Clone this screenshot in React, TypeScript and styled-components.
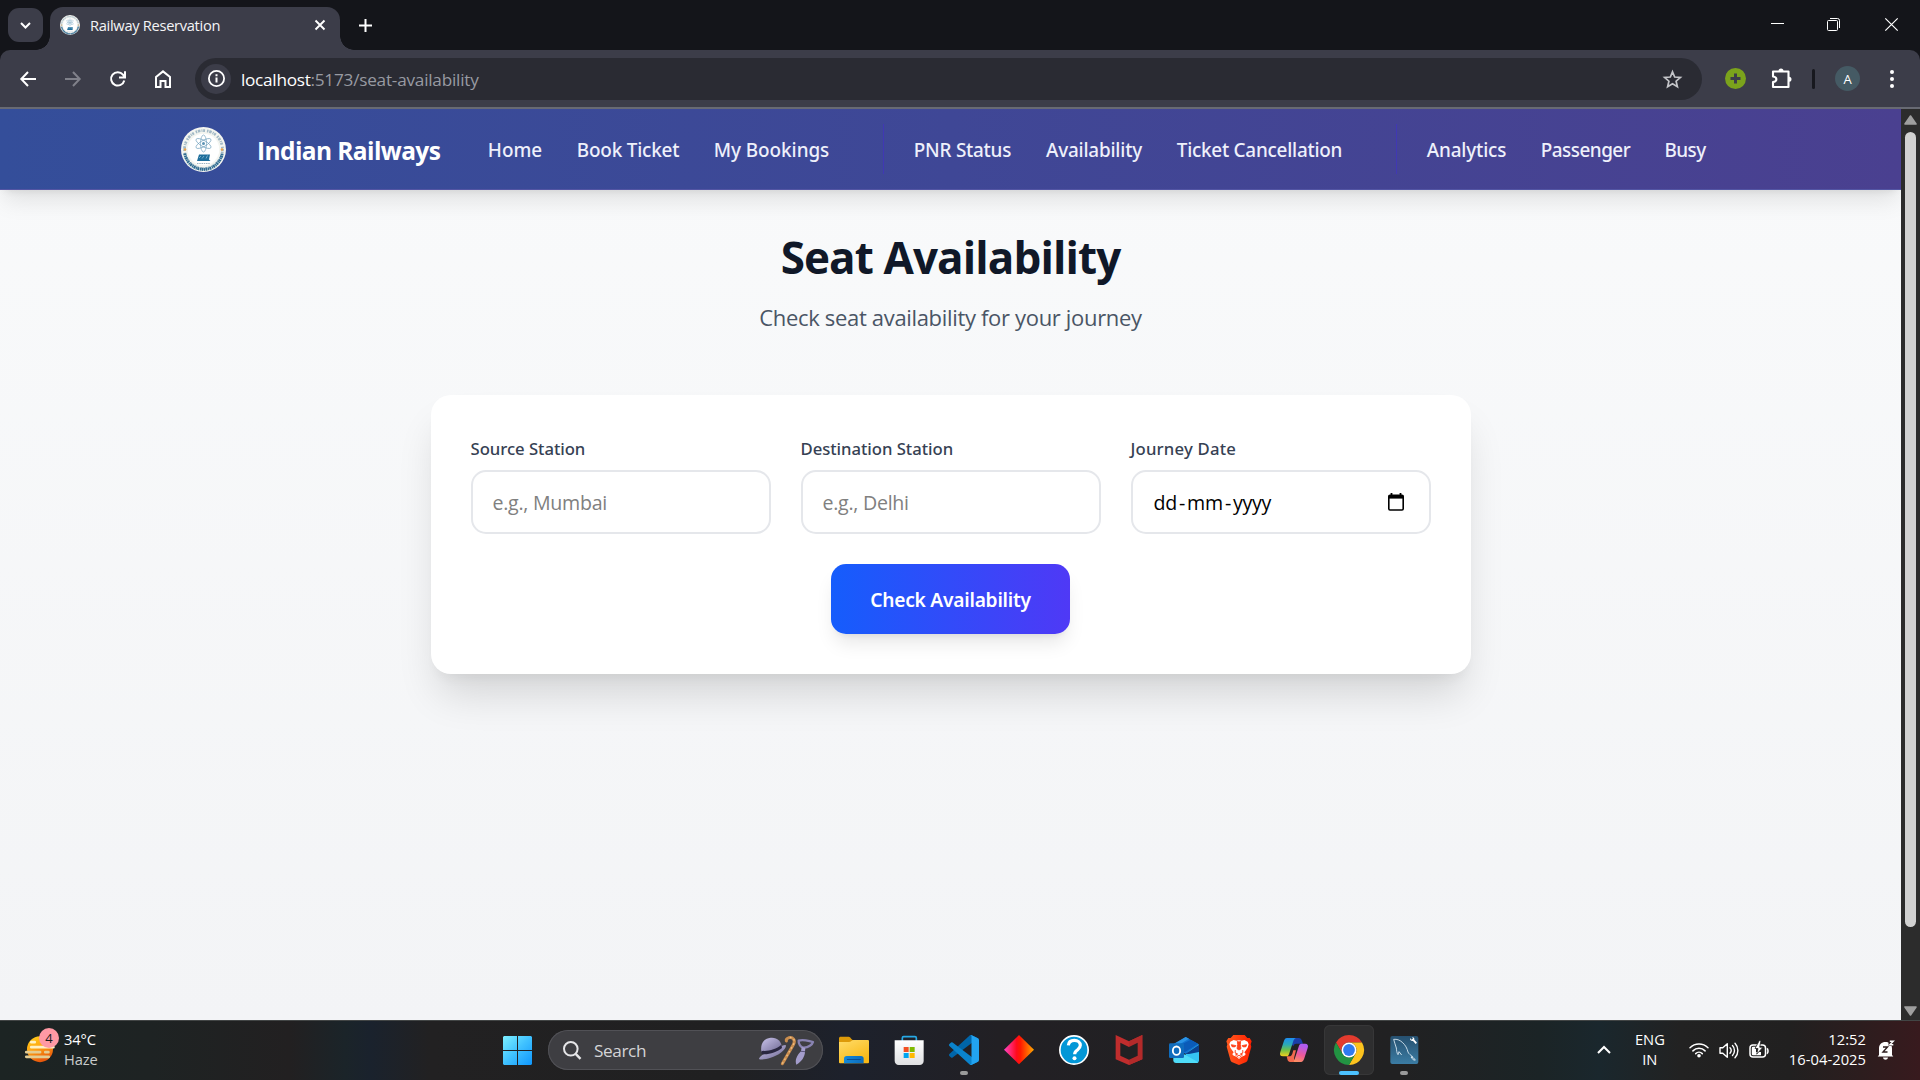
import React from "react";
import styled, { createGlobalStyle, css } from "styled-components";

const Global = createGlobalStyle`
  * { box-sizing: border-box; }
  html, body { margin: 0; padding: 0; }
  body { overflow: hidden; background: #14151a; }
  svg { display: block; flex: none; overflow: visible; }
`;

const Screen = styled.div`
  width: 1920px;
  height: 1080px;
  display: flex;
  flex-direction: column;
  font-family: "Open Sans", "Noto Sans", sans-serif;
  overflow: hidden;
`;

/* ---------- browser tab strip ---------- */

const TabStrip = styled.div`
  height: 50px;
  flex: none;
  display: flex;
  background: #14151a;
  padding: 7px 0 0 8px;
`;

const TabSearch = styled.div`
  width: 35px;
  height: 34px;
  margin: 1px 7px 0 0;
  border-radius: 11px;
  background: #3c3d49;
  display: grid;
  place-items: center;
`;

const Tab = styled.div`
  position: relative;
  width: 290px;
  height: 43px;
  padding: 0 15px 7px 10px;
  display: flex;
  align-items: center;
  background: #3c3d49;
  border-radius: 13px 13px 0 0;

  &::before,
  &::after {
    content: "";
    position: absolute;
    bottom: 0;
    width: 14px;
    height: 14px;
  }
  &::before {
    left: -14px;
    background: radial-gradient(circle at 0 0, transparent 13.5px, #3c3d49 14px);
  }
  &::after {
    right: -14px;
    background: radial-gradient(circle at 100% 0, transparent 13.5px, #3c3d49 14px);
  }
`;

const TabTitle = styled.span`
  flex: 1;
  padding: 0 0 1px 10px;
  font-size: 14.7px;
  letter-spacing: -0.32px;
  color: #f4f4f6;
  white-space: nowrap;
`;

const NewTab = styled.div`
  width: 50px;
  height: 36px;
  display: grid;
  place-items: center;
`;

const WindowControls = styled.div`
  margin-left: auto;
  display: flex;
  height: 35px;
`;

const WindowButton = styled.div<{ $w: number }>`
  width: ${(p) => p.$w}px;
  display: grid;
  place-items: center;
`;

/* ---------- browser toolbar ---------- */

const ToolbarBack = styled.div`
  background: #14151a;
  flex: none;
`;

const Toolbar = styled.div`
  height: 59px;
  display: flex;
  align-items: center;
  background: #3c3d49;
  border-radius: 10px 10px 0 0;
  border-bottom: 2px solid #686a73;
  padding-left: 5px;

  & > * {
    flex: none;
  }
`;

const ToolButton = styled.div<{ $w?: number; $end?: boolean }>`
  width: ${(p) => p.$w ?? 45}px;
  height: 42px;
  margin-left: ${(p) => (p.$end ? "auto" : 0)};
  display: grid;
  place-items: center;
`;

const Omnibox = styled.div`
  width: 1507px;
  height: 42px;
  margin-left: 10px;
  border-radius: 21px;
  background: #2a2b33;
  display: flex;
  align-items: center;
  padding: 0 20px 0 6px;
`;

const SiteInfo = styled.div`
  width: 30px;
  height: 30px;
  border-radius: 50%;
  background: #3c3d49;
  display: grid;
  place-items: center;
`;

const Url = styled.span`
  flex: 1;
  padding: 1px 0 0 10px;
  font-size: 17.2px;
  letter-spacing: -0.23px;
  color: #989aa2;
`;

const Host = styled.span`
  color: #ffffff;
  letter-spacing: -0.28px;
`;

const Separator = styled.div`
  width: 3px;
  height: 20px;
  border-radius: 2px;
  background: #17181e;
  margin-right: 3px;
`;

const Avatar = styled.div`
  width: 25px;
  height: 25px;
  border-radius: 50%;
  background: #455a64;
  color: #fff;
  font-size: 13px;
  display: grid;
  place-items: center;
`;

/* ---------- viewport ---------- */

const Viewport = styled.div`
  flex: 1;
  min-height: 0;
  display: flex;
`;

const Page = styled.div`
  width: 1901px;
  display: flex;
  flex-direction: column;
  overflow: hidden;
  background: linear-gradient(to bottom, #f9fafb, #f3f4f6);
`;

const Scrollbar = styled.div`
  width: 19px;
  background: #2c2c2c;
  display: flex;
  flex-direction: column;
  align-items: center;
  padding: 6px 0 4px;
`;

const Thumb = styled.div`
  width: 11px;
  height: 795px;
  margin: 7px 0 auto;
  border-radius: 6px;
  background: #d1d1d1;
`;

const SiteHeader = styled.header`
  position: relative;
  z-index: 1;
  height: 81px;
  flex: none;
  display: flex;
  align-items: center;
  padding-left: 181px;
  background: linear-gradient(to right, #344e9a, #3f4796 50%, #4a4090);
  border-bottom: 1px solid #5355a4;
  box-shadow: 0 14px 22px -4px rgba(0, 0, 0, 0.1), 0 5px 8px -5px rgba(0, 0, 0, 0.1);
`;

const Brand = styled.span`
  width: 184px;
  margin-left: 30px;
  padding: 3px 0 0 1px;
  font-size: 24.5px;
  font-weight: 700;
  letter-spacing: -0.6px;
  color: #fff;
  white-space: nowrap;
`;

const NavGroup = styled.nav<{ $divided?: boolean }>`
  display: flex;
  align-items: center;
  gap: 33px;
  height: 50px;
  margin-left: 47px;
  ${(p) =>
    p.$divided &&
    css`
      margin-left: 53px;
      padding-left: 29px;
      border-left: 1px solid #4038b4;
    `}
`;

const NavLink = styled.a<{ $w: number; $track: number }>`
  width: ${(p) => p.$w}px;
  padding-top: 1px;
  display: flex;
  justify-content: center;
  font-family: "Noto Sans", sans-serif;
  font-size: 18.9px;
  font-weight: 500;
  letter-spacing: ${(p) => p.$track}px;
  color: #eef0fb;
  white-space: nowrap;
`;

const Main = styled.main`
  display: flex;
  flex-direction: column;
  align-items: center;
  padding-top: 42px;
`;

const Heading = styled.h1`
  margin: 0;
  font-size: 44px;
  line-height: 50px;
  font-weight: 700;
  letter-spacing: -0.9px;
  color: #101828;
`;

const Lead = styled.p`
  margin: 19px 0 0;
  font-size: 22px;
  line-height: 32px;
  letter-spacing: -0.33px;
  color: #4a5565;
`;

const Card = styled.form`
  width: 1040px;
  height: 279px;
  margin-top: 62px;
  padding: 41px 40px 39px;
  border-radius: 20px;
  background: #fff;
  box-shadow: 0 27px 42px -8px rgba(0, 0, 0, 0.14), 0 10px 12.5px -7.5px rgba(0, 0, 0, 0.06);
  display: flex;
  flex-direction: column;
  align-items: center;
  gap: 30px;
`;

const Fields = styled.div`
  width: 100%;
  display: grid;
  grid-template-columns: repeat(3, 1fr);
  gap: 30px;
`;

const Field = styled.label<{ $track?: number }>`
  display: flex;
  flex-direction: column;
  gap: 9px;
  font-family: "Noto Sans", sans-serif;
  font-size: 16.7px;
  line-height: 25px;
  font-weight: 500;
  letter-spacing: ${(p) => p.$track ?? -0.04}px;
  color: #364153;
`;

const control = css`
  width: 100%;
  height: 64px;
  border: 2px solid #e5e7eb;
  border-radius: 15px;
  background: #fff;
  font-family: "Open Sans", "Noto Sans", sans-serif;
  font-size: 19.6px;
  font-weight: 400;
`;

const TextInput = styled.input`
  ${control}
  padding: 1px 20px 0;
  letter-spacing: -0.27px;
  &::placeholder {
    color: #808080;
    opacity: 1;
  }
`;

const DateInput = styled.div`
  ${control}
  display: flex;
  align-items: center;
  justify-content: space-between;
  padding: 0 25px 0 21px;
  letter-spacing: -0.3px;
  color: #000;
`;

const DateParts = styled.span`
  display: flex;
  gap: 2.1px;
  padding-top: 1px;
`;

const Submit = styled.button`
  width: 239px;
  height: 70px;
  flex: none;
  border: 0;
  border-radius: 15px;
  background: linear-gradient(to right, #155dfc, #4f39f6);
  box-shadow: 0 12.5px 19px -4px rgba(0, 0, 0, 0.1), 0 5px 7.5px -5px rgba(0, 0, 0, 0.1);
  font-family: "Noto Sans", sans-serif;
  font-size: 19.2px;
  font-weight: 600;
  letter-spacing: -0.24px;
  color: #fff;
`;

/* ---------- taskbar ---------- */

const Taskbar = styled.div`
  height: 60px;
  flex: none;
  display: flex;
  align-items: center;
  padding-bottom: 1px;
  border-top: 1px solid #424545;
  background: linear-gradient(
    to right,
    #1c2423 0,
    #1e2323 150px,
    #222021 290px,
    #1b2429 345px,
    #1a222d 370px,
    #222122 430px,
    #202021 720px,
    #1d212c 850px,
    #222024 1000px,
    #212122 1400px,
    #1b2426 1540px,
    #1a272d 1600px,
    #222222 1680px,
    #212020 1790px,
    #2c1d1e 1860px,
    #381a1e 1920px
  );

  & > * {
    flex: none;
  }
`;

const Weather = styled.div`
  width: 492px;
  padding-left: 25px;
  display: flex;
  align-items: center;
  gap: 5px;
`;

const WeatherIcon = styled.div`
  position: relative;
  margin-top: -10px;
`;

const Badge = styled.span`
  position: absolute;
  left: 14px;
  top: 1px;
  width: 20px;
  height: 20px;
  border-radius: 50%;
  background: #ff99a4;
  color: #1a1a1a;
  font-size: 13px;
  line-height: 20px;
  text-align: center;
`;

const Lines = styled.div<{ $align?: string; $w?: number; $track?: number }>`
  width: ${(p) => (p.$w ? p.$w + "px" : "auto")};
  margin-top: -3px;
  display: flex;
  flex-direction: column;
  text-align: ${(p) => p.$align ?? "left"};
  font-size: 14.7px;
  line-height: 20px;
  letter-spacing: ${(p) => p.$track ?? 0}px;
  color: #fff;
  white-space: nowrap;
`;

const Muted = styled.span`
  color: #c9cbcb;
`;

const Slot = styled.div<{ $active?: boolean; $running?: boolean }>`
  position: relative;
  width: 50px;
  height: 50px;
  margin-right: 5px;
  border-radius: 6px;
  display: grid;
  place-items: center;
  ${(p) =>
    p.$active &&
    css`
      background: #2e2e2f;
      box-shadow: inset 0 0 0 1px #373738;
    `}
  ${(p) =>
    (p.$active || p.$running) &&
    css`
      &::after {
        content: "";
        position: absolute;
        bottom: 0;
        left: ${p.$active ? 15 : 21}px;
        width: ${p.$active ? 20 : 8}px;
        height: 4px;
        border-radius: 2px;
        background: ${p.$active ? "#4cc2ff" : "#9a9a9a"};
      }
    `}
`;

const SearchBox = styled.div`
  width: 275px;
  height: 40px;
  margin: 0 6px 0 1px;
  border-radius: 20px;
  background: #3e3e42;
  box-shadow: inset 0 0 0 1px #515156;
  display: flex;
  align-items: center;
  padding: 0 9px 0 15px;
`;

const SearchLabel = styled.span`
  flex: 1;
  padding-left: 13px;
  font-size: 17.2px;
  letter-spacing: -0.4px;
  color: #d4d4d6;
`;

const Tray = styled.div`
  margin-left: auto;
  display: flex;
  align-items: center;
  padding-right: 25px;
`;

const TrayIcons = styled.div`
  display: flex;
  align-items: center;
  gap: 10px;
  margin-right: 20px;
`;

const Clock = styled(Lines)`
  margin-right: 11px;
`;

/* ---------- drawings ---------- */

const Emblem = ({ size }: { size: number }) => (
  <svg width={size} height={size} viewBox="0 0 90 90">
    <circle cx="45" cy="45" r="45" fill="#f4f5f0" />
    <circle cx="45" cy="45" r="38" fill="none" stroke="#7f9fb4" strokeWidth="5.5" strokeDasharray="3 1.6 5 2.2 2 1.4 4 4" pathLength="239" opacity=".7" />
    <path d="M7.5 53a38 38 0 0 0 75 0" fill="none" stroke="#2f6c92" strokeWidth="6" strokeDasharray="3.6 1.2 2.4 1" />
    <circle cx="45" cy="45" r="31.5" fill="#fff" />
    <circle cx="8" cy="45" r="2.6" fill="#e8a04a" />
    <circle cx="82" cy="45" r="2.6" fill="#e8a04a" />
    <g fill="none" stroke="#6c9dbb" strokeWidth="1.3">
      <ellipse cx="45" cy="33" rx="6" ry="17" />
      <ellipse cx="45" cy="33" rx="6" ry="17" transform="rotate(60 45 33)" />
      <ellipse cx="45" cy="33" rx="6" ry="17" transform="rotate(120 45 33)" />
    </g>
    <circle cx="45" cy="33" r="3" fill="#5d94b5" />
    <path d="M36 55h22l-2 10 3 3H32z" fill="#1f6f9c" />
    <path d="M36 62l4-4M42 63l4-5M50 63l3-6" stroke="#9cc8de" strokeWidth="1.4" />
    <path d="M32 73h26" stroke="#9db4c2" strokeWidth="2.4" strokeDasharray="3 1.5" />
  </svg>
);

const stroke = { fill: "none", stroke: "#fff", strokeWidth: 2 } as const;

const HazeIcon = () => (
  <svg width="34" height="37" viewBox="75 80 102 110">
    <defs>
      <linearGradient id="sun" x1="0" y1="0" x2="0.4" y2="1">
        <stop offset="0" stopColor="#ffd21a" />
        <stop offset=".5" stopColor="#ffa713" />
        <stop offset="1" stopColor="#e8590c" />
      </linearGradient>
    </defs>
    <circle cx="120" cy="146" r="39" fill="url(#sun)" />
    <g strokeLinecap="round" strokeWidth="8.5">
      <path d="M94 125h10M94 140h66" stroke="#fff1c4" />
      <path d="M79 155h41M136 155h9M79 169h67" stroke="#e3cc92" />
    </g>
  </svg>
);

const StartIcon = () => (
  <svg width="29" height="29" viewBox="0 0 29 29">
    <defs>
      <linearGradient id="win" x1="0" y1="0" x2="1" y2="1">
        <stop offset="0" stopColor="#7df0ff" />
        <stop offset=".5" stopColor="#3fc1ff" />
        <stop offset="1" stopColor="#0f96fc" />
      </linearGradient>
    </defs>
    <path d="M1 0h13v14H0V1zM15 0h13l1 1v13H15zM0 15h14v14H1l-1-1zM15 15h14v13l-1 1H15z" fill="url(#win)" />
  </svg>
);

const SearchArt = () => (
  <svg width="55" height="29" viewBox="806 78 165 87">
    <defs>
      <linearGradient id="hat" x1="0" y1="0" x2="1" y2="1">
        <stop offset="0" stopColor="#c9c3ea" />
        <stop offset="1" stopColor="#6d6791" />
      </linearGradient>
    </defs>
    <path d="M806 146c4-12 30-22 50-30 18-8 31-14 31-9 0 12-24 30-46 36-17 5-36 8-35 3z" fill="url(#hat)" />
    <path d="M813 126c-3-22 4-38 24-42 22-4 34 8 38 26-16 14-40 21-62 16z" fill="url(#hat)" />
    <path d="M813 122c20 3 44-4 60-18l2 10c-14 12-44 22-61 18z" fill="#2a2740" />
    <path d="M876 161l33-57c8-14-2-24-13-21-6 2-9 6-8 10" fill="none" stroke="#c98d4e" strokeWidth="9" strokeLinecap="round" />
    <path d="M876 161l33-57c8-14-2-24-13-21" fill="none" stroke="#f0bf85" strokeWidth="4" strokeDasharray="5 8" />
    <path d="M925 92c10-4 32 0 43 4-2 8-14 16-27 17-10 1-17-12-16-21z" fill="none" stroke="#8983b2" strokeWidth="7" strokeLinejoin="round" />
    <path d="M934 111l11 3-1 11c0 14-10 30-26 39-5-14 2-28 14-40z" fill="#a49dcc" />
    <path d="M932 124l12 1" stroke="#5a547c" strokeWidth="3" />
  </svg>
);

const FolderIcon = () => (
  <svg width="30" height="30" viewBox="1047 75 90 90">
    <defs>
      <linearGradient id="fold" x1="0" y1="0" x2="0.6" y2="1">
        <stop offset="0" stopColor="#ffdc69" />
        <stop offset="1" stopColor="#f9b916" />
      </linearGradient>
      <linearGradient id="foldb" x1="0" y1="0" x2="1" y2="0">
        <stop offset="0" stopColor="#1389da" />
        <stop offset="1" stopColor="#0d6cbc" />
      </linearGradient>
    </defs>
    <path d="M1047 85c0-3 2-5 5-5h24c6 0 8 10 14 10v12h-43z" fill="#dd9a09" />
    <path d="M1047 96h30c6 0 8-6 14-6h43c2 0 3 1 3 3v64c0 2-1 3-3 3h-84c-2 0-3-1-3-3z" fill="url(#fold)" />
    <path d="M1062 160v-14c0-5 3-8 8-8h43c5 0 8 3 8 8v14z" fill="url(#foldb)" />
    <path d="M1072 148.500h39" stroke="#0a4f96" strokeWidth="3" strokeLinecap="round" />
  </svg>
);

const StoreIcon = () => (
  <svg width="30" height="30" viewBox="1210 75 90 90">
    <defs>
      <linearGradient id="bag" x1="0" y1="0" x2="0" y2="1">
        <stop offset="0" stopColor="#ffffff" />
        <stop offset="1" stopColor="#dfe0e2" />
      </linearGradient>
    </defs>
    <path d="M1235 96V84c0-3 1-4 4-4h34c3 0 4 1 4 4v12" fill="none" stroke="#27a9e6" strokeWidth="5" />
    <path d="M1212 91h87v62c0 7-5 12-12 12h-63c-7 0-12-5-12-12z" fill="url(#bag)" />
    <path d="M1239 111h15v15h-15z" fill="#f25022" />
    <path d="M1257 111h15v15h-15z" fill="#7fba00" />
    <path d="M1239 129h15v15h-15z" fill="#00a4ef" />
    <path d="M1257 129h15v15h-15z" fill="#ffb900" />
  </svg>
);

const CodeIcon = () => (
  <svg width="30" height="30" viewBox="0 0 100 100">
    <path d="M96.500 10.700L75.900.8a6.200 6.200 0 0 0-7.100 1.200L1.300 63.600a4.200 4.200 0 0 0 0 6.200l5.500 5a4.200 4.200 0 0 0 5.300.2L93.400 13.300c2.700-2 6.600-.1 6.600 3.300v-.2a6.200 6.200 0 0 0-3.500-5.700z" fill="#0065a9" />
    <path d="M96.500 89.300l-20.600 9.900a6.200 6.200 0 0 1-7.100-1.200L1.300 36.400a4.200 4.200 0 0 1 0-6.200l5.500-5a4.200 4.200 0 0 1 5.300-.2l81.300 61.700c2.700 2 6.600.1 6.600-3.300v.2a6.200 6.200 0 0 1-3.500 5.700z" fill="#0a83cc" />
    <path d="M75.900 99.200a6.200 6.200 0 0 1-7.100-1.200c2.300 2.300 6.200.7 6.200-2.600V4.700c0-3.300-3.900-4.900-6.200-2.600A6.200 6.200 0 0 1 75.900.8l20.600 9.900A6.300 6.300 0 0 1 100 16.400v67.200a6.300 6.300 0 0 1-3.500 5.700z" fill="#22a3f1" />
  </svg>
);

const DiamondIcon = () => (
  <svg width="30" height="30" viewBox="0 0 90 90">
    <defs>
      <linearGradient id="dia" x1="0" y1="0" x2="1" y2="0">
        <stop offset="0" stopColor="#ff45c8" />
        <stop offset=".42" stopColor="#ff0a1c" />
        <stop offset=".55" stopColor="#ff1a00" />
        <stop offset="1" stopColor="#ffa800" />
      </linearGradient>
    </defs>
    <path d="M45 0l45 44-45 44L0 44z" fill="url(#dia)" />
  </svg>
);

const HelpIcon = () => (
  <svg width="30" height="30" viewBox="0 0 90 90">
    <circle cx="45" cy="45" r="42.500" fill="#0397d7" stroke="#fff" strokeWidth="5" />
    <path d="M28 31c1-10 8-15 18-15s18 6 18 15c0 7-4 10-9 14-5 3.500-8 6-8 13" fill="none" stroke="#fff" strokeWidth="9.500" />
    <circle cx="46.500" cy="69.500" r="6" fill="#fff" />
  </svg>
);

const ShieldIcon = () => (
  <svg width="30" height="30" viewBox="461 75 90 90">
    <path d="M466 75l40 19 40-19v73l-40 17-40-17z" fill="#c02d2d" />
    <path d="M506 94l40-19v73l-40 17z" fill="#b32a2a" />
    <path d="M480 98l26 13 26-13v39l-26 12-26-12z" fill="#212123" />
  </svg>
);

const OutlookIcon = () => (
  <svg width="30" height="30" viewBox="627 75 90 90">
    <path d="M640 103l37-22 38 21v10l-38 20-37-20z" fill="#1272cf" />
    <path d="M640 103l37-22 10 5-47 28z" fill="#2a94e6" />
    <path d="M655 108l37-19 22 12-40 26z" fill="#0b5bb8" />
    <path d="M717 103v48c0 5-3 8-8 8h-60l40-37z" fill="#35c4f3" />
    <path d="M676 132l41-28v22l-30 6z" fill="#0a3f8d" />
    <path d="M640 115l75 42c-2 2-4 2-6 2h-61c-5 0-8-3-8-8z" fill="#4fdcf8" />
    <rect x="627" y="100" width="45" height="44" rx="4" fill="#0f6cbd" />
    <ellipse cx="649.500" cy="122" rx="11" ry="12.500" fill="none" stroke="#fff" strokeWidth="5.500" />
  </svg>
);

const BraveIcon = () => (
  <svg width="30" height="30" viewBox="792 75 90 90">
    <defs>
      <linearGradient id="brv" x1="0" y1="0" x2="1" y2="0">
        <stop offset="0" stopColor="#ff5a1f" />
        <stop offset="1" stopColor="#ff2000" />
      </linearGradient>
    </defs>
    <path d="M820 75h34l8 9h7l6 10-3 9 2 7-11 39c-1 4-3 6-6 8l-20 8-20-8c-3-2-5-4-6-8l-11-39 2-7-3-9 6-10h7z" fill="url(#brv)" />
    <path d="M811 95l10-5 8 2 8-1 8 1 8-2 10 5 3 8-3 10-7 10-3 4 4 5-2 4-11 5-7 6-7-6-11-5-2-4 4-5-3-4-7-10-3-10z" fill="#fff" />
    <path d="M814 104l14 3-4 4-8-1zM860 104l-14 3 4 4 8-1zM832 94l5 2 5-2-1 10 2 12-6 4-6-4 2-12zM826 120l-1 8 8 4-6 5M848 120l1 8-8 4 6 5" fill="#ff4018" stroke="#ff4018" strokeWidth="2.500" />
    <path d="M837 134l8 5-8 6-8-6z" fill="#ff4018" />
    <path d="M837 137l5 3-5 4-5-4z" fill="#fff" />
  </svg>
);

const CopilotIcon = () => (
  <svg width="30" height="30" viewBox="957 75 90 90">
    <defs>
      <linearGradient id="cpa" x1="0" y1="0" x2="0" y2="1">
        <stop offset="0" stopColor="#1d8df0" />
        <stop offset=".35" stopColor="#2aa8b8" />
        <stop offset=".65" stopColor="#6cc04a" />
        <stop offset="1" stopColor="#f4cf1b" />
      </linearGradient>
      <linearGradient id="cpb" x1="0.3" y1="0" x2="0" y2="1">
        <stop offset="0" stopColor="#b05cf0" />
        <stop offset=".5" stopColor="#ee5a9a" />
        <stop offset="1" stopColor="#ff9a55" />
      </linearGradient>
    </defs>
    <path d="M1000 84h16c6 0 8 4 10 9l3 8h-20c-6 0-8 4-9 8l-9-10z" fill="#1a3ea8" />
    <path d="M981 84h27c-5 2-7 6-9 12l-12 37c-2 5-4 6-9 6h-9c-8 0-11-5-8-13l10-31c3-8 5-11 10-11z" fill="url(#cpa)" />
    <path d="M1023 156h-27c5-2 7-6 9-12l12-37c2-5 4-6 9-6h9c8 0 11 5 8 13l-10 31c-3 8-5 11-10 11z" fill="url(#cpb)" />
    <path d="M1004 156h-13c-6 0-8-4-9-9l-2-8h7c6 0 8-3 10-8l3-10h8l-5 19c-2 8 0 12-1 16z" fill="#f36a4e" />
  </svg>
);

const ChromeIcon = () => (
  <svg width="30" height="30" viewBox="-15 -15 30 30">
    <path d="M0-7.500H13A15 15 0 0 0-13-7.500L-6.500 3.750A7.500 7.500 0 0 1 0-7.500z" fill="#e33b2e" />
    <path d="M13-7.500A15 15 0 0 1 0 15L6.500 3.750A7.500 7.500 0 0 0 0-7.500z" fill="#fcc31e" />
    <path d="M-13-7.500A15 15 0 0 0 0 15L6.500 3.750A7.500 7.500 0 0 1-6.500 3.750z" fill="#229342" />
    <circle r="7.500" fill="#fff" />
    <circle r="5.900" fill="#2f7af0" />
  </svg>
);

const DolphinIcon = () => (
  <svg width="30" height="30" viewBox="1286 75 90 90">
    <defs>
      <linearGradient id="sql" x1="0" y1="0" x2="0" y2="1">
        <stop offset="0" stopColor="#26506f" />
        <stop offset="1" stopColor="#3b7ca3" />
      </linearGradient>
    </defs>
    <rect x="1290" y="78" width="84" height="84" rx="6" fill="url(#sql)" />
    <path d="M1300 88c10-1 18 2 26 9 10 9 14 18 17 29 2 6 8 9 14 14l-5 1 8 3 5 6M1300 88c2 10 6 17 8 26 1 7 1 15 5 20l3-9 8 10M1352 141l6 8 7 2" fill="none" stroke="#dcebf4" strokeWidth="2.600" strokeLinejoin="round" />
    <path d="M1349 84l5 5 4-4-3-3c5-1 8 3 7 7l8 9-4 4-8-9c-5 1-10-3-9-9z" fill="#fff" />
  </svg>
);

const WifiIcon = () => (
  <svg width="20" height="16" viewBox="0 0 20 16">
    <g fill="none" stroke="#fff" strokeWidth="1.500" strokeLinecap="round">
      <path d="M1 5.800a12.800 12.800 0 0 1 18 0M3.900 8.900a8.600 8.600 0 0 1 12.200 0M6.700 11.600a4.700 4.700 0 0 1 6.600 0" />
    </g>
    <circle cx="10" cy="13.700" r="1.800" fill="#fff" />
  </svg>
);

const VolumeIcon = () => (
  <svg width="20" height="17" viewBox="0 0 20 17">
    <g fill="none" stroke="#fff" strokeWidth="1.400" strokeLinecap="round" strokeLinejoin="round">
      <path d="M1 5.800h2.800L8.300 1.700v13.600l-4.500-4.100H1z" />
      <path d="M11 5.800a4 4 0 0 1 0 5.400M13.500 3.600a7 7 0 0 1 0 9.800M16 1.300a10.500 10.500 0 0 1 0 14.400" />
    </g>
  </svg>
);

const BatteryIcon = () => (
  <svg width="20" height="18" viewBox="0 0 20 18">
    <rect x="1" y="4" width="15.500" height="12" rx="3" fill="none" stroke="#fff" strokeWidth="1.500" />
    <path d="M17.800 7.500c1.600.3 1.600 4.900 0 5.200" fill="none" stroke="#fff" strokeWidth="1.600" />
    <path d="M2.800 7q0-1.200 1.200-1.200h3V11h5v3.300H4q-1.200 0-1.200-1.200z" fill="#fff" />
    <path d="M10.300-.5L6 7.500h3l-1.300 5.700L14 6.200h-3.300L12-.5z" fill="#fff" stroke="#212121" strokeWidth=".8" />
  </svg>
);

const BellIcon = () => (
  <svg width="18" height="20" viewBox="0 0 18 20">
    <path d="M2 15V8.500C2 4.500 4.500 2 8.500 2S15 4.500 15 8.500V15l1.300 1.600H.7zM6 17.500h5c-.4 3-4.600 3-5 0z" fill="#fff" />
    <path d="M6 7h4.500l-4.500 5h4.500" fill="none" stroke="#2c1d1e" strokeWidth="1.400" />
    <path d="M11.500 0H18v6h-6.500z" fill="#2e1d1f" />
    <path d="M12.800 1.200h3.500l-3.500 3.600h3.500" fill="none" stroke="#fff" strokeWidth="1.400" />
  </svg>
);

const firstLinks: [string, number, number][] = [
  ["Home", 56, 0],
  ["Book Ticket", 104, -0.2],
  ["My Bookings", 117, -0.05],
];
const secondLinks: [string, number, number][] = [
  ["PNR Status", 99, -0.24],
  ["Availability", 98, -0.2],
  ["Ticket Cancellation", 167, -0.24],
];
const thirdLinks: [string, number, number][] = [
  ["Analytics", 81, -0.16],
  ["Passenger", 91, -0.5],
  ["Busy", 42, -0.55],
];

const Links = ({ items }: { items: [string, number, number][] }) => (
  <>
    {items.map(([label, w, track]) => (
      <NavLink key={label} $w={w} $track={track}>
        {label}
      </NavLink>
    ))}
  </>
);

export default function App() {
  return (
    <Screen>
      <Global />
      <TabStrip>
        <TabSearch>
          <svg width="11" height="7" viewBox="0 0 11 7">
            <path d="M1 1l4.500 4.500L10 1" {...stroke} />
          </svg>
        </TabSearch>
        <Tab>
          <Emblem size={20} />
          <TabTitle>Railway Reservation</TabTitle>
          <svg width="10" height="10" viewBox="0 0 10 10">
            <path d="M.5.5l9 9M9.500.5l-9 9" {...stroke} strokeWidth={1.9} />
          </svg>
        </Tab>
        <NewTab>
          <svg width="13" height="13" viewBox="0 0 13 13">
            <path d="M6.500 0v13M0 6.500h13" {...stroke} />
          </svg>
        </NewTab>
        <WindowControls>
          <WindowButton $w={53}>
            <svg width="13" height="13" viewBox="0 0 13 13">
              <path d="M0 5.500h13" {...stroke} strokeWidth={1} />
            </svg>
          </WindowButton>
          <WindowButton $w={59}>
            <svg width="13" height="13" viewBox="0 0 13 13">
              <rect x=".5" y="2.500" width="10" height="10" rx="1" {...stroke} strokeWidth={1} />
              <path d="M3 .5h7.500a2 2 0 0 1 2 2V10" {...stroke} strokeWidth={1} />
            </svg>
          </WindowButton>
          <WindowButton $w={57}>
            <svg width="13" height="13" viewBox="0 0 13 13">
              <path d="M.3.3l12.400 12.400M12.700.3L.3 12.700" {...stroke} strokeWidth={1.2} />
            </svg>
          </WindowButton>
        </WindowControls>
      </TabStrip>

      <ToolbarBack>
        <Toolbar>
          <ToolButton>
            <svg width="16" height="16" viewBox="0 0 16 16">
              <path d="M8 1L1.300 8 8 15M1.500 8H16" {...stroke} />
            </svg>
          </ToolButton>
          <ToolButton>
            <svg width="16" height="16" viewBox="0 0 16 16">
              <path d="M8 1l6.700 7L8 15M14.500 8H0" {...stroke} stroke="#80818a" />
            </svg>
          </ToolButton>
          <ToolButton>
            <svg width="16" height="16" viewBox="0 0 16 16">
              <path d="M14.300 9.500A6.700 6.700 0 1 1 13 3.600L14.500 6M15 .3v6.200H9" {...stroke} />
            </svg>
          </ToolButton>
          <ToolButton>
            <svg width="16" height="18" viewBox="0 0 16 18">
              <path d="M1 7l7-5.600L15 7v10h-4.500v-6h-5v6H1z" {...stroke} />
            </svg>
          </ToolButton>
          <Omnibox>
            <SiteInfo>
              <svg width="17" height="17" viewBox="0 0 17 17">
                <circle cx="8.500" cy="8.500" r="7.600" {...stroke} strokeWidth={1.8} />
                <path d="M8.500 7.500v5M8.500 4.300v2" {...stroke} />
              </svg>
            </SiteInfo>
            <Url>
              <Host>localhost</Host>:5173/seat-availability
            </Url>
            <svg width="19" height="18" viewBox="0 0 19 18">
              <path d="M9.500 1.800l2.200 5.200 5.700.5-4.300 3.700 1.300 5.500-4.900-2.900-4.900 2.900 1.300-5.500L1.600 7.500 7.300 7z" {...stroke} stroke="#c4c5c9" strokeWidth={1.7} />
            </svg>
          </Omnibox>
          <ToolButton $w={66}>
            <svg width="21" height="21" viewBox="0 0 21 21">
              <circle cx="10.500" cy="10.500" r="10.500" fill="#7ba31c" />
              <path d="M10.500 5.500v10M5.500 10.500h10" {...stroke} stroke="#3c3d49" strokeWidth={3} />
            </svg>
          </ToolButton>
          <ToolButton $w={26}>
            <svg width="21" height="21" viewBox="0 0 21 21">
              <path d="M2 3.500h15.500V19H2v-5c4.500-.5 4.500-5 0-5.500z" {...stroke} strokeLinejoin="round" strokeWidth={2.1} />
              <path d="M7.500 3a2.500 2.500 0 0 1 5 0zM18 8.700a2.500 2.500 0 0 1 0 5z" fill="#fff" />
            </svg>
          </ToolButton>
          <ToolButton $w={41}>
            <Separator />
          </ToolButton>
          <Avatar>A</Avatar>
          <ToolButton $w={56} $end>
            <svg width="4" height="18" viewBox="0 0 4 18">
              <circle cx="2" cy="2" r="2" fill="#fff" />
              <circle cx="2" cy="9" r="2" fill="#fff" />
              <circle cx="2" cy="16" r="2" fill="#fff" />
            </svg>
          </ToolButton>
        </Toolbar>
      </ToolbarBack>

      <Viewport>
        <Page>
          <SiteHeader>
            <Emblem size={45} />
            <Brand>Indian Railways</Brand>
            <NavGroup>
              <Links items={firstLinks} />
            </NavGroup>
            <NavGroup $divided>
              <Links items={secondLinks} />
            </NavGroup>
            <NavGroup $divided>
              <Links items={thirdLinks} />
            </NavGroup>
          </SiteHeader>
          <Main>
            <Heading>Seat Availability</Heading>
            <Lead>Check seat availability for your journey</Lead>
            <Card>
              <Fields>
                <Field>
                  Source Station
                  <TextInput placeholder="e.g., Mumbai" />
                </Field>
                <Field>
                  Destination Station
                  <TextInput placeholder="e.g., Delhi" />
                </Field>
                <Field $track={0.2}>
                  Journey Date
                  <DateInput>
                    <DateParts>
                      <span>dd</span>
                      <span>-</span>
                      <span>mm</span>
                      <span>-</span>
                      <span>yyyy</span>
                    </DateParts>
                    <svg width="16" height="18" viewBox="0 0 16 18">
                      <path d="M3.500 0v2M12.500 0v2" stroke="#000" strokeWidth="1.800" />
                      <rect x=".8" y="2.300" width="14.400" height="14.700" rx="1.200" fill="none" stroke="#000" strokeWidth="1.600" />
                      <path d="M.8 2h14.400v3.600H.8z" />
                    </svg>
                  </DateInput>
                </Field>
              </Fields>
              <Submit type="button">Check Availability</Submit>
            </Card>
          </Main>
        </Page>
        <Scrollbar>
          <svg width="13" height="10" viewBox="0 0 13 10">
            <path d="M6.500 1L12 9H1z" fill="#9f9f9f" stroke="#9f9f9f" strokeWidth="1.600" strokeLinejoin="round" />
          </svg>
          <Thumb />
          <svg width="13" height="10" viewBox="0 0 13 10">
            <path d="M6.500 9L1 1h11z" fill="#9f9f9f" stroke="#9f9f9f" strokeWidth="1.600" strokeLinejoin="round" />
          </svg>
        </Scrollbar>
      </Viewport>

      <Taskbar>
        <Weather>
          <WeatherIcon>
            <HazeIcon />
            <Badge>4</Badge>
          </WeatherIcon>
          <Lines $track={-0.1}>
            <span>34°C</span>
            <Muted>Haze</Muted>
          </Lines>
        </Weather>
        <Slot><StartIcon /></Slot>
        <SearchBox>
          <svg width="18" height="19" viewBox="0 0 18 19">
            <circle cx="7.800" cy="7.800" r="6.800" {...stroke} stroke="#e6e6e8" />
            <path d="M12.700 12.900l4.800 5" {...stroke} stroke="#e6e6e8" strokeWidth={2.4} />
          </svg>
          <SearchLabel>Search</SearchLabel>
          <SearchArt />
        </SearchBox>
        <Slot><FolderIcon /></Slot>
        <Slot><StoreIcon /></Slot>
        <Slot $running><CodeIcon /></Slot>
        <Slot><DiamondIcon /></Slot>
        <Slot><HelpIcon /></Slot>
        <Slot><ShieldIcon /></Slot>
        <Slot><OutlookIcon /></Slot>
        <Slot><BraveIcon /></Slot>
        <Slot><CopilotIcon /></Slot>
        <Slot $active><ChromeIcon /></Slot>
        <Slot $running><DolphinIcon /></Slot>
        <Tray>
          <svg width="14" height="8" viewBox="0 0 14 8">
            <path d="M1 7l6-6 6 6" {...stroke} />
          </svg>
          <Lines $align="center" $w={78}>
            <span>ENG</span>
            <span>IN</span>
          </Lines>
          <TrayIcons>
            <WifiIcon />
            <VolumeIcon />
            <BatteryIcon />
          </TrayIcons>
          <Clock $align="right" $track={0.05}>
            <span>12:52</span>
            <span>16-04-2025</span>
          </Clock>
          <BellIcon />
        </Tray>
      </Taskbar>
    </Screen>
  );
}
